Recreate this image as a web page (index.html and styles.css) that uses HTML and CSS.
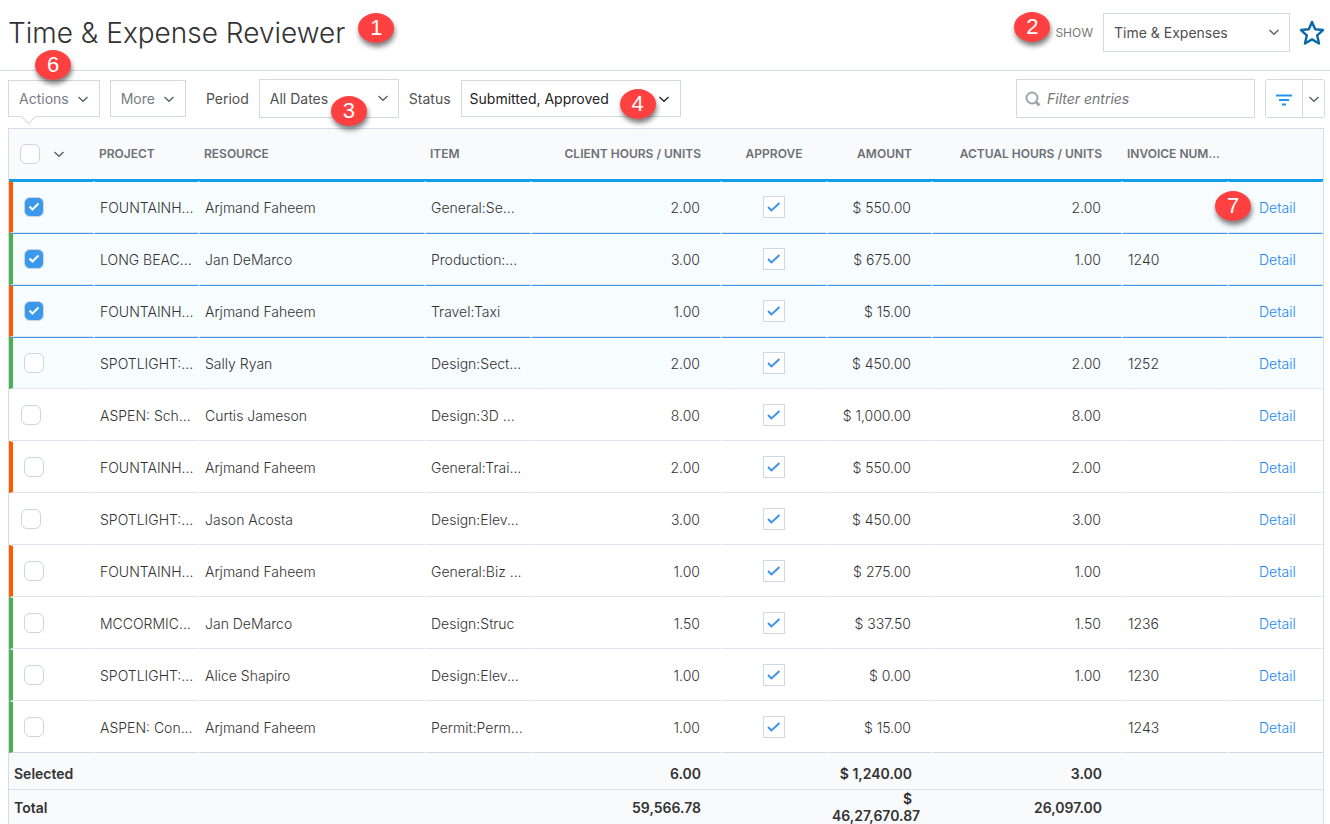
FILE: index.html
```html
<!DOCTYPE html>
<html lang="en">
<head>
    <meta charset="UTF-8" />
    <meta name="viewport" content="width=device-width, initial-scale=1.0"/>
    <title>Time &amp; Expense Reviewer</title>

    <link rel="stylesheet" href="styles.css">
</head>
<body>

<!-- Shared icons -->
<svg class="sprite" aria-hidden="true">
    <symbol id="chevron" viewBox="0 0 12 12">
        <path d="M1.500 4 L6 8.300 L10.500 4" fill="none" stroke="currentColor" stroke-width="1.300"/>
    </symbol>
</svg>

<!-- Page header -->
<header class="page-header">
    <h1 class="page-title">Time &amp; Expense Reviewer <span class="badge badge-title">1</span></h1>
    <div class="show-group">
        <span class="badge badge-show">2</span>
        <label class="show-label" for="showSelect">SHOW</label>
        <span class="select-wrap select-show">
            <select id="showSelect"><option>Time &amp; Expenses</option></select>
            <svg class="chevron"><use href="#chevron"/></svg>
        </span>
        <button class="star-btn" aria-label="Add to favourites">
            <svg width="26" height="26" viewBox="0 0 26 26">
                <path d="M13 2 L16.200 9.300 L24 10.100 L18.200 15.400 L20 23.500 L13 19.400 L6 23.500 L7.800 15.400 L2 10.100 L9.800 9.300 Z" fill="none" stroke="#0b6ca8" stroke-width="2.500" stroke-linejoin="round"/>
            </svg>
        </button>
    </div>
</header>

<!-- Toolbar -->
<div class="toolbar">
    <div class="menu-wrap">
        <button class="menu-btn menu-btn-open">Actions <svg class="chevron"><use href="#chevron"/></svg></button>
        <span class="badge badge-actions">6</span>
    </div>
    <button class="menu-btn">More <svg class="chevron"><use href="#chevron"/></svg></button>

    <label class="field-label label-period" for="periodSelect">Period</label>
    <span class="select-wrap select-period">
        <select id="periodSelect"><option>All Dates</option></select>
        <svg class="chevron"><use href="#chevron"/></svg>
        <span class="badge badge-period">3</span>
    </span>

    <label class="field-label" for="statusSelect">Status</label>
    <span class="select-wrap select-status">
        <select id="statusSelect"><option>Submitted, Approved</option></select>
        <svg class="chevron"><use href="#chevron"/></svg>
        <span class="badge badge-status">4</span>
    </span>

    <div class="search">
        <svg width="16" height="16" viewBox="0 0 16 16">
            <circle cx="7" cy="7" r="5.500" fill="none" stroke="#a0a5aa" stroke-width="2"/>
            <path d="M11 11 L14.500 14.500" stroke="#a0a5aa" stroke-width="3"/>
        </svg>
        <input type="text" placeholder="Filter entries" aria-label="Filter entries"/>
    </div>
    <div class="split-btn">
        <button class="split-main" aria-label="Filter">
            <svg width="16" height="12" viewBox="0 0 16 12">
                <path d="M0 1.500 H16" stroke="#2196f3" stroke-width="2"/>
                <path d="M3 6 H13" stroke="#2196f3" stroke-width="2"/>
                <path d="M6 10.500 H10" stroke="#2196f3" stroke-width="2"/>
            </svg>
        </button>
        <button class="split-more" aria-label="Filter options"><svg class="chevron"><use href="#chevron"/></svg></button>
    </div>
</div>

<!-- Entries -->
<div class="grid">
    <table>
        <colgroup>
            <col class="col-check"><col class="col-project"><col class="col-resource"><col class="col-item"><col class="col-hours">
            <col class="col-approve"><col class="col-amount"><col class="col-hours"><col class="col-invoice"><col class="col-detail">
        </colgroup>
        <thead>
            <tr>
                <th class="check">
                    <input type="checkbox" class="row-check" aria-label="Select all">
                    <button class="check-menu" aria-label="Selection options"><svg class="chevron"><use href="#chevron"/></svg></button>
                </th>
                <th>PROJECT</th>
                <th>RESOURCE</th>
                <th>ITEM</th>
                <th class="num">CLIENT HOURS / UNITS</th>
                <th class="center">APPROVE</th>
                <th class="num">AMOUNT</th>
                <th class="num">ACTUAL HOURS / UNITS</th>
                <th>INVOICE NUM...</th>
                <th></th>
            </tr>
        </thead>
        <tbody>
            <tr class="tint selected orange">
                <td class="check"><input type="checkbox" class="row-check" aria-label="Select row" checked></td>
                <td>FOUNTAINH...</td>
                <td>Arjmand Faheem</td>
                <td>General:Se...</td>
                <td class="num">2.00</td>
                <td class="center"><input type="checkbox" class="approve" aria-label="Approve" checked></td>
                <td class="num">$ 550.00</td>
                <td class="num">2.00</td>
                <td></td>
                <td class="detail"><span class="badge badge-detail">7</span><a href="#">Detail</a></td>
            </tr>
            <tr class="tint selected green">
                <td class="check"><input type="checkbox" class="row-check" aria-label="Select row" checked></td>
                <td>LONG BEAC...</td>
                <td>Jan DeMarco</td>
                <td>Production:...</td>
                <td class="num">3.00</td>
                <td class="center"><input type="checkbox" class="approve" aria-label="Approve" checked></td>
                <td class="num">$ 675.00</td>
                <td class="num">1.00</td>
                <td>1240</td>
                <td class="detail"><a href="#">Detail</a></td>
            </tr>
            <tr class="tint selected orange">
                <td class="check"><input type="checkbox" class="row-check" aria-label="Select row" checked></td>
                <td>FOUNTAINH...</td>
                <td>Arjmand Faheem</td>
                <td>Travel:Taxi</td>
                <td class="num">1.00</td>
                <td class="center"><input type="checkbox" class="approve" aria-label="Approve" checked></td>
                <td class="num">$ 15.00</td>
                <td class="num"></td>
                <td></td>
                <td class="detail"><a href="#">Detail</a></td>
            </tr>
            <tr class="tint green">
                <td class="check"><input type="checkbox" class="row-check" aria-label="Select row"></td>
                <td>SPOTLIGHT:...</td>
                <td>Sally Ryan</td>
                <td>Design:Sect...</td>
                <td class="num">2.00</td>
                <td class="center"><input type="checkbox" class="approve" aria-label="Approve" checked></td>
                <td class="num">$ 450.00</td>
                <td class="num">2.00</td>
                <td>1252</td>
                <td class="detail"><a href="#">Detail</a></td>
            </tr>
            <tr>
                <td class="check"><input type="checkbox" class="row-check" aria-label="Select row"></td>
                <td>ASPEN: Sch...</td>
                <td>Curtis Jameson</td>
                <td>Design:3D ...</td>
                <td class="num">8.00</td>
                <td class="center"><input type="checkbox" class="approve" aria-label="Approve" checked></td>
                <td class="num">$ 1,000.00</td>
                <td class="num">8.00</td>
                <td></td>
                <td class="detail"><a href="#">Detail</a></td>
            </tr>
            <tr class="orange">
                <td class="check"><input type="checkbox" class="row-check" aria-label="Select row"></td>
                <td>FOUNTAINH...</td>
                <td>Arjmand Faheem</td>
                <td>General:Trai...</td>
                <td class="num">2.00</td>
                <td class="center"><input type="checkbox" class="approve" aria-label="Approve" checked></td>
                <td class="num">$ 550.00</td>
                <td class="num">2.00</td>
                <td></td>
                <td class="detail"><a href="#">Detail</a></td>
            </tr>
            <tr>
                <td class="check"><input type="checkbox" class="row-check" aria-label="Select row"></td>
                <td>SPOTLIGHT:...</td>
                <td>Jason Acosta</td>
                <td>Design:Elev...</td>
                <td class="num">3.00</td>
                <td class="center"><input type="checkbox" class="approve" aria-label="Approve" checked></td>
                <td class="num">$ 450.00</td>
                <td class="num">3.00</td>
                <td></td>
                <td class="detail"><a href="#">Detail</a></td>
            </tr>
            <tr class="orange">
                <td class="check"><input type="checkbox" class="row-check" aria-label="Select row"></td>
                <td>FOUNTAINH...</td>
                <td>Arjmand Faheem</td>
                <td>General:Biz ...</td>
                <td class="num">1.00</td>
                <td class="center"><input type="checkbox" class="approve" aria-label="Approve" checked></td>
                <td class="num">$ 275.00</td>
                <td class="num">1.00</td>
                <td></td>
                <td class="detail"><a href="#">Detail</a></td>
            </tr>
            <tr class="green">
                <td class="check"><input type="checkbox" class="row-check" aria-label="Select row"></td>
                <td>MCCORMIC...</td>
                <td>Jan DeMarco</td>
                <td>Design:Struc</td>
                <td class="num">1.50</td>
                <td class="center"><input type="checkbox" class="approve" aria-label="Approve" checked></td>
                <td class="num">$ 337.50</td>
                <td class="num">1.50</td>
                <td>1236</td>
                <td class="detail"><a href="#">Detail</a></td>
            </tr>
            <tr class="green">
                <td class="check"><input type="checkbox" class="row-check" aria-label="Select row"></td>
                <td>SPOTLIGHT:...</td>
                <td>Alice Shapiro</td>
                <td>Design:Elev...</td>
                <td class="num">1.00</td>
                <td class="center"><input type="checkbox" class="approve" aria-label="Approve" checked></td>
                <td class="num">$ 0.00</td>
                <td class="num">1.00</td>
                <td>1230</td>
                <td class="detail"><a href="#">Detail</a></td>
            </tr>
            <tr class="green">
                <td class="check"><input type="checkbox" class="row-check" aria-label="Select row"></td>
                <td>ASPEN: Con...</td>
                <td>Arjmand Faheem</td>
                <td>Permit:Perm...</td>
                <td class="num">1.00</td>
                <td class="center"><input type="checkbox" class="approve" aria-label="Approve" checked></td>
                <td class="num">$ 15.00</td>
                <td class="num"></td>
                <td>1243</td>
                <td class="detail"><a href="#">Detail</a></td>
            </tr>
        </tbody>
        <tfoot>
            <tr class="sum-selected">
                <td colspan="4">Selected</td>
                <td class="num">6.00</td>
                <td></td>
                <td class="num">$ 1,240.00</td>
                <td class="num">3.00</td>
                <td></td>
                <td></td>
            </tr>
            <tr class="sum-total">
                <td colspan="4">Total</td>
                <td class="num">59,566.78</td>
                <td></td>
                <td class="num">$ 46,27,670.87</td>
                <td class="num">26,097.00</td>
                <td></td>
                <td></td>
            </tr>
        </tfoot>
    </table>
</div>

</body>
</html>
```
FILE: styles.css
```css
* {
    box-sizing: border-box;
}

body {
    margin: 0;
    font-family: Inter, "Liberation Sans", sans-serif;
    font-size: 14px;
    font-weight: 400;
    color: #505050;
    background: #fff;
    overflow: hidden;
}

button, input, select {
    font: inherit;
    color: inherit;
    margin: 0;
}

button {
    background: #fff;
    cursor: pointer;
}

.sprite {
    position: absolute;
    width: 0;
    height: 0;
}

.chevron {
    width: 12px;
    height: 12px;
    color: #5a5f66;
    flex: none;
}

/* Header */
.page-header {
    display: flex;
    align-items: center;
    justify-content: space-between;
    height: 71px;
    padding: 0 5px 5px 8px;
    border-bottom: 1px solid #d5d9e3;
}

.page-title {
    position: relative;
    margin: 0;
    font-size: 28px;
    line-height: 36px;
    font-weight: 300;
    color: #333;
}

.show-group {
    position: relative;
    display: flex;
    align-items: center;
}

.show-label {
    margin-right: 10px;
    font-size: 12px;
    color: #777;
}

.star-btn {
    display: flex;
    margin-left: 9px;
    padding: 0;
    border: none;
}

.select-wrap {
    position: relative;
    display: block;
}

.select-wrap select {
    display: block;
    width: 100%;
    height: 39px;
    padding: 0 30px 0 10px;
    appearance: none;
    border: 1px solid #d3d8e3;
    border-radius: 0;
    background: #fff;
}

.select-wrap .chevron {
    position: absolute;
    top: 13px;
    right: 10px;
    pointer-events: none;
}

.select-show {
    width: 187px;
}

/* Toolbar */
.toolbar {
    display: flex;
    align-items: center;
    height: 57px;
    padding: 0 5px 2px 8px;
}

.menu-wrap {
    position: relative;
    margin-right: 10px;
}

.menu-btn {
    position: relative;
    display: flex;
    align-items: center;
    gap: 8px;
    height: 37px;
    padding: 0 10px;
    border: 1px solid #d3d8e3;
    color: #777c82;
}

/* Pointer under the open menu button */
.menu-btn-open::after {
    content: "";
    position: absolute;
    left: 14px;
    bottom: -6px;
    width: 10px;
    height: 10px;
    border: solid #d3d8e3;
    border-width: 0 1px 1px 0;
    background: #fff;
    transform: rotate(45deg);
}

.field-label {
    margin: 0 10px;
}

.label-period {
    margin-left: 20px;
}

.select-period {
    width: 140px;
}

.select-status {
    width: 220px;
}

.select-status select {
    height: 37px;
    padding-left: 8px;
    color: #222;
}

.select-status .chevron {
    right: 11px;
    color: #222;
}

.search {
    display: flex;
    align-items: center;
    gap: 6px;
    width: 239px;
    height: 39px;
    margin-left: auto;
    padding: 0 8px;
    border: 1px solid #d3d8e3;
}

.search input {
    flex: 1;
    min-width: 0;
    padding: 0;
    border: none;
    outline: none;
}

.search input::placeholder {
    color: #757575;
    font-style: italic;
    opacity: 1;
}

.split-btn {
    display: flex;
    height: 39px;
    margin-left: 10px;
    border: 1px solid #d3d8e3;
    border-radius: 3px;
    overflow: hidden;
}

.split-btn button {
    display: flex;
    align-items: center;
    justify-content: center;
    padding: 0;
    border: none;
}

.split-btn .split-main {
    width: 37px;
    border-right: 1px solid #d3d8e3;
}

.split-main svg {
    margin-top: 2px;
}

.split-more {
    width: 21px;
}

/* Grid */
.grid {
    margin: 0 6px 0 8px;
    border: 1px solid #d5dce8;
}

table {
    width: 100%;
    table-layout: fixed;
    border-collapse: separate;
    border-spacing: 0;
}

.col-check { width: 85px; }
.col-project { width: 105px; }
.col-resource { width: 226px; }
.col-item { width: 106px; }
.col-hours { width: 190px; }
.col-approve { width: 106px; }
.col-amount { width: 105px; }
.col-invoice { width: 106px; }
.col-detail { width: 95px; }

th {
    height: 52px;
    padding: 0 20px 1px 5px;
    border-bottom: 2px solid #139fe8;
    background: #f9fafc;
    font-size: 12px;
    font-weight: 600;
    color: #6b7075;
    text-align: left;
    white-space: nowrap;
}

th:nth-child(9) {
    padding-right: 0;
}

tbody td {
    height: 52px;
    padding: 0 0 0 5px;
    border: 1px solid #fff;
    border-bottom-color: #dde5f0;
    font-weight: 300;
    color: #333;
    white-space: nowrap;
}

.tint td {
    border-color: #f7fcff #f7fcff #dde5f0;
    background: #f7fcff;
}

.selected td,
.selected + tr td {
    border-top-color: #3b99ec;
}

tbody tr:first-child td {
    border-top-color: #139fe8;
}

tbody tr:last-child td {
    border-bottom-color: #d0d7e3;
}

th.num,
tbody td.num {
    padding-right: 20px;
    text-align: right;
}

th.center {
    padding: 0 0 1px;
    text-align: center;
}

tbody td.center {
    padding: 0;
    text-align: center;
}

th.check,
tbody td.check {
    padding: 0 0 0 11px;
}

tbody .orange .check,
tbody .green .check {
    border-left: 4px solid #4caf50;
}

tbody .orange .check {
    border-left-color: #ff5a00;
}

tbody .detail {
    position: relative;
    padding-left: 30px;
}

.detail a {
    color: #2288ee;
    text-decoration: none;
}

.row-check,
.approve {
    display: inline-block;
    appearance: none;
    background: #fff center no-repeat;
    vertical-align: middle;
}

.row-check {
    width: 20px;
    height: 20px;
    border: 1px solid #cdd5e2;
    border-radius: 6px;
}

.row-check:checked {
    background-color: #3b99ec;
    background-image: url("data:image/svg+xml,%3Csvg xmlns='http://www.w3.org/2000/svg' width='12' height='10'%3E%3Cpath d='M1.500 4.500 L4.500 7.500 L10.500 1.500' fill='none' stroke='white' stroke-width='2'/%3E%3C/svg%3E");
}

.approve {
    width: 22px;
    height: 22px;
    border: 1px solid #d0d7e3;
}

.approve:checked {
    background-image: url("data:image/svg+xml,%3Csvg xmlns='http://www.w3.org/2000/svg' width='14' height='12'%3E%3Cpath d='M1 6 L4.500 9.500 L12.500 2' fill='none' stroke='%233b90f2' stroke-width='1.900'/%3E%3C/svg%3E");
}

.check-menu {
    padding: 0;
    margin-left: 10px;
    border: none;
    background: none;
    vertical-align: middle;
}

.check-menu .chevron {
    display: block;
}

/* Totals */
tfoot td {
    padding: 0 20px 0 5px;
    background: #f9fafc;
    font-weight: 600;
    line-height: 17px;
    color: #333;
}

tfoot .num {
    text-align: right;
}

.sum-selected td {
    height: 37px;
    padding-top: 5px;
    border-bottom: 1px solid #dde3ec;
}

.sum-total td {
    height: 34px;
}

/* Numbered callouts */
.badge {
    position: absolute;
    z-index: 5;
    width: 36px;
    height: 30px;
    border-radius: 50%;
    background: #ff4040;
    box-shadow: 1px 4px 5px rgba(0, 0, 0, 0.5);
    color: #fff;
    font: 400 22px/30px "Liberation Sans", sans-serif;
    text-align: center;
}

.badge-title {
    top: -2px;
    left: 100%;
    margin-left: 13px;
}

.badge-show {
    top: -1px;
    right: 100%;
    margin-right: 5px;
}

.badge-actions {
    top: -30px;
    left: 27px;
}

.badge-period {
    top: 17px;
    left: 72px;
}

.badge-status {
    top: 9px;
    left: 159px;
}

.badge-detail {
    top: 9px;
    left: -14px;
}
```
